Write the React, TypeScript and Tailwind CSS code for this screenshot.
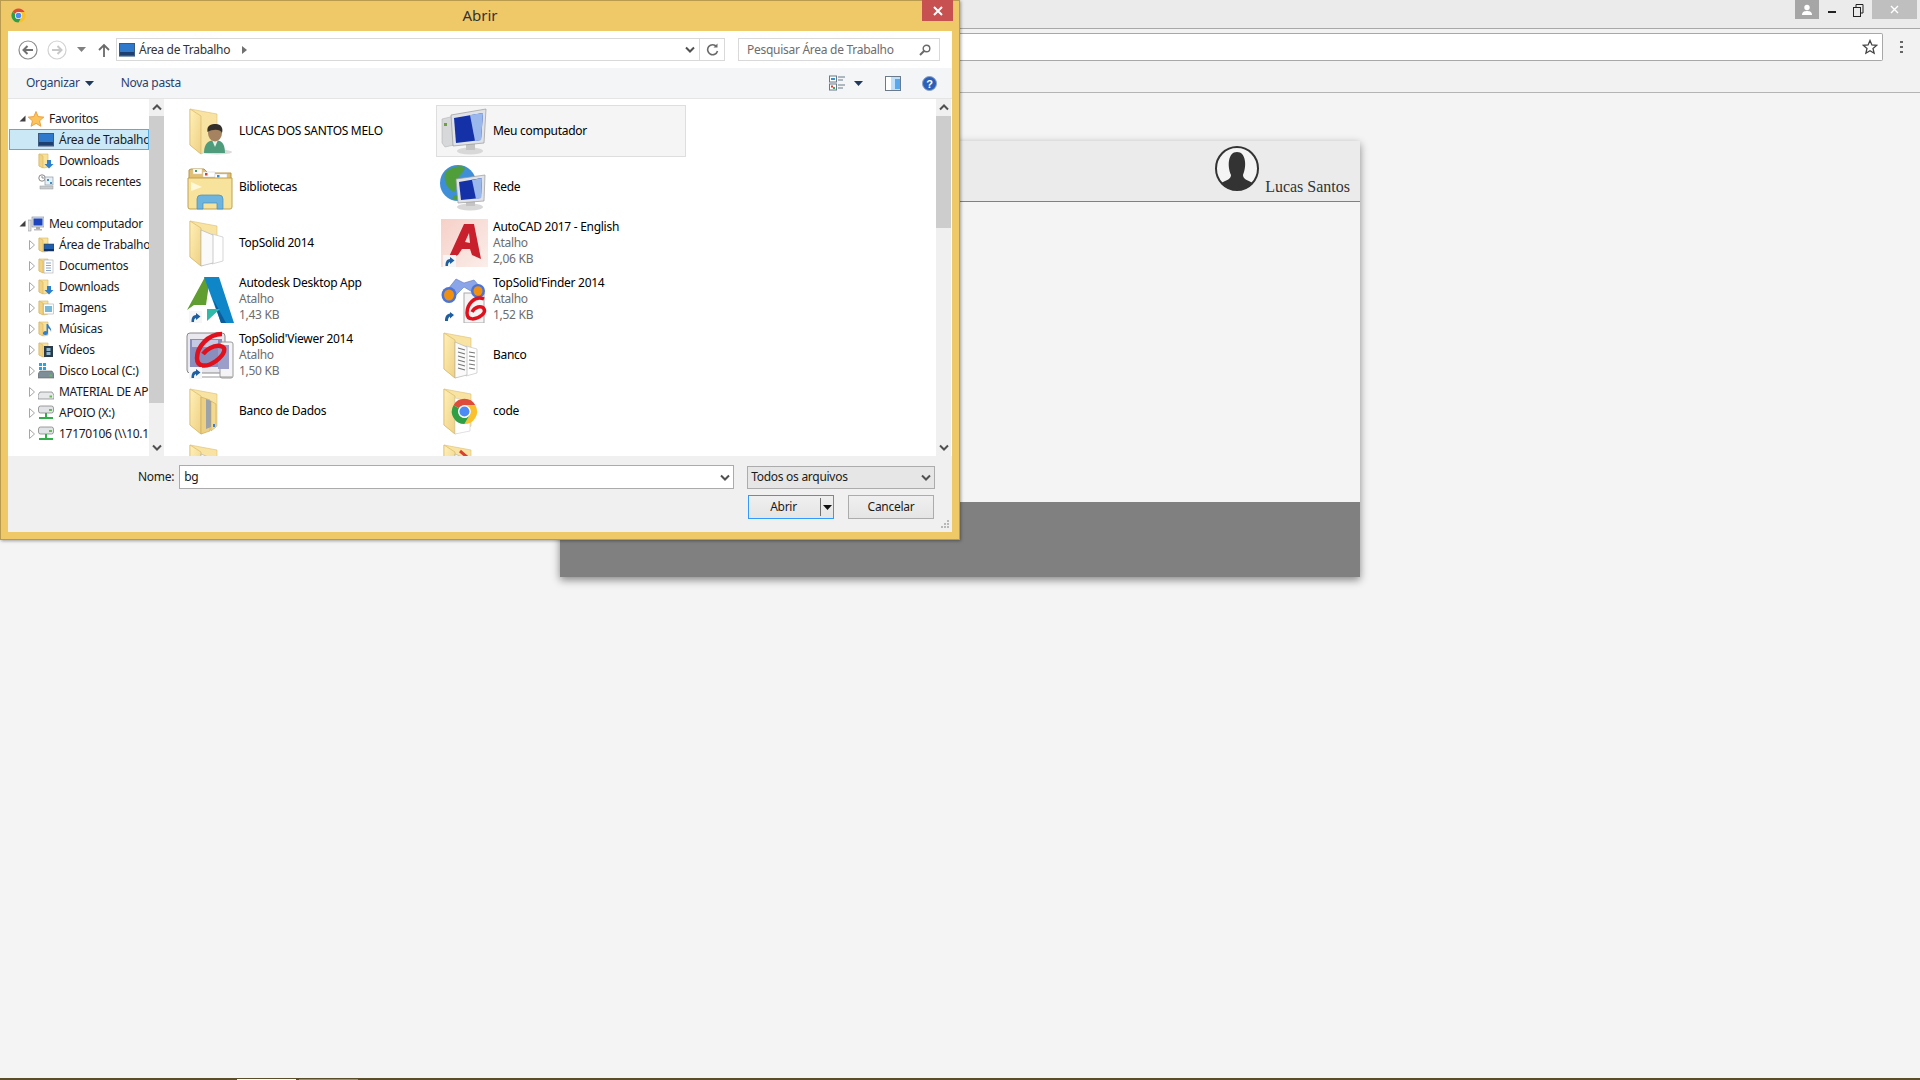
import React from "react";

const uiFont = "font-['Noto_Sans',sans-serif] tracking-[-0.28px]";

const Chevron = ({ dir = "down", color = "#505050", className = "" }: { dir?: "down" | "up"; color?: string; className?: string }) => (
  <svg width="10" height="7" viewBox="0 0 10 7" className={className}>
    <path d={dir === "down" ? "M1 1.5 L5 5.5 L9 1.5" : "M1 5.5 L5 1.5 L9 5.5"} fill="none" stroke={color} strokeWidth="2" />
  </svg>
);

const ChromeMark = () => (
  <g>
    <path d="M16 1 A15 15 0 0 1 29 8.5 L16 8.5 A7.5 7.5 0 0 0 9.5 12.2 L3 8.5 A15 15 0 0 1 16 1Z" fill="#dd4b39" />
    <path d="M29 8.5 A15 15 0 0 1 16 31 L22.5 19.8 A7.5 7.5 0 0 0 22.5 12.2 L16 8.5Z" fill="#fbc02d" />
    <path d="M3 8.5 L9.5 12.2 A7.5 7.5 0 0 0 16 23.5 A7.5 7.5 0 0 0 22.5 19.8 L16 31 A15 15 0 0 1 3 8.5Z" fill="#2f9e44" />
    <circle cx="16" cy="16" r="7.5" fill="#fff" />
    <circle cx="16" cy="16" r="6" fill="#4c8bf5" />
  </g>
);

const Shortcut = () => (
  <g>
    <rect x="3" y="36" width="13" height="12" fill="#f4f6f8" />
    <path d="M5.5 47 C5.5 42 7 40.5 10 40 L10 38 L14.5 41.5 L10 45 L10 43 C8.5 43.3 8 45 8 47Z" fill="#1f5f9f" />
  </g>
);

const BigFolder = ({ children, over }: { children?: React.ReactNode; over?: React.ReactNode }) => (
  <svg width="48" height="48" viewBox="0 0 48 48">
    <defs>
      <linearGradient id="flap" x1="0" y1="0" x2="1" y2="1">
        <stop offset="0" stopColor="#fff0b8" />
        <stop offset="1" stopColor="#eed083" />
      </linearGradient>
    </defs>
    <path d="M4 2 L31 7 L31 39 L15 47 L4 38Z" fill="#f9e3a2" stroke="#dfc47c" strokeWidth="0.7" />
    {children}
    <path d="M4 2 L15 9 L15 47 L4 38Z" fill="url(#flap)" stroke="#d9b968" strokeWidth="0.7" />
    {over}
  </svg>
);

const Papers = () => (
  <g>
    <path d="M26 15 L37 18 L37 42 L26 45Z" fill="#fff" stroke="#c4c4c4" strokeWidth="0.7" />
    <path d="M15 11 L27 16 L27 44 L15 47Z" fill="#fafafa" stroke="#b4b4b4" strokeWidth="0.7" />
  </g>
);

const ListIcon = ({ name }: { name: string }) => {
  if (name === "user")
    return (
      <BigFolder
        over={
          <g>
            <ellipse cx="31" cy="45" rx="15" ry="2.5" fill="#dcdcdc" />
            <path d="M18 46 C18 36 23 33 29 33 C35 33 39 36 39 46Z" fill="#4f9c7d" />
            <path d="M26 33 L29 40 L32 33Z" fill="#e6efe9" />
            <ellipse cx="29" cy="26" rx="7" ry="8.5" fill="#a58260" />
            <path d="M21.5 25 C20.5 18 25 17 30 17 C35 17 37.5 21 36 26 C34.5 22 27 22 21.5 25Z" fill="#33302c" />
          </g>
        }
      />
    );
  if (name === "lib")
    return (
      <svg width="48" height="48" viewBox="0 0 48 48">
        <path d="M3 7 L3 44 L45 44 L45 10 L22 10 L18 6 L5 6Z" fill="#e3c070" stroke="#b8964a" />
        <rect x="7" y="6" width="9" height="5" fill="#fff" stroke="#ccc" strokeWidth="0.5" />
        <rect x="9" y="7" width="2" height="2" fill="#3da55d" />
        <rect x="17" y="9" width="12" height="5" fill="#fff" stroke="#ccc" strokeWidth="0.5" />
        <rect x="19" y="10" width="2.5" height="2.5" fill="#d9402f" />
        <rect x="29" y="11" width="12" height="5" fill="#fff" stroke="#ccc" strokeWidth="0.5" />
        <rect x="31" y="12" width="2.5" height="2.5" fill="#2f8fdc" />
        <path d="M2 15 L46 15 L46 44 Q46 46 44 46 L4 46 Q2 46 2 44Z" fill="#f8e39c" stroke="#bfa050" />
        <path d="M11 46 L11 36 Q11 32 15 32 L33 32 Q37 32 37 36 L37 46 L31 46 L31 40 L17 40 L17 46Z" fill="#6db4de" stroke="#4b8cb8" strokeWidth="0.7" />
        <path d="M5 19 L16 24 L5 28Z" fill="#fff8da" />
      </svg>
    );
  if (name === "plain") return <BigFolder over={<Papers />} />;
  if (name === "doc")
    return (
      <BigFolder
        over={
          <g>
            <Papers />
            <path d="M18 17 L25 19 M18 21 L25 23 M18 25 L25 27 M18 29 L25 31 M18 33 L25 35 M18 37 L25 39 M29 21 L35 22 M29 25 L35 26 M29 29 L35 30 M29 33 L35 34 M29 37 L35 38" stroke="#777" strokeWidth="1.2" />
          </g>
        }
      />
    );
  if (name === "data")
    return (
      <BigFolder
        over={
          <g>
            <path d="M15 10 L24 13 L24 44 L15 47Z" fill="#eed083" stroke="#c8a85c" strokeWidth="0.6" />
            <path d="M20 12 L25 14 L25 40 L20 42Z" fill="#9aa2aa" />
            <path d="M25 14 L30 17 L30 40 L25 44Z" fill="#f4d98c" stroke="#c8a85c" strokeWidth="0.6" />
            <rect x="27" y="37" width="2" height="3" fill="#3a80d0" />
          </g>
        }
      />
    );
  if (name === "code")
    return (
      <BigFolder
        over={
          <g>
            <path d="M15 11 L30 15 L30 44 L15 47Z" fill="#fff" stroke="#ccc" strokeWidth="0.6" />
            <g transform="translate(11 11) scale(0.84)">
              <ChromeMark />
            </g>
          </g>
        }
      />
    );
  if (name === "clip")
    return (
      <BigFolder
        over={
          <g>
            <Papers />
            <path d="M20 8 L34 20" stroke="#d9402f" strokeWidth="3" />
          </g>
        }
      />
    );
  if (name === "autodesk")
    return (
      <svg width="48" height="48" viewBox="0 0 48 48">
        <path d="M1 35 L19 2 L24 2 L20 30 L8 30Z" fill="#5f9e2f" />
        <path d="M18 2 L33 2 L48 48 L35 48Z" fill="#0f86c8" />
        <path d="M35 48 L27 24 L40 48Z" fill="#0b5d9c" />
        <path d="M21 34 L34 34 L21 46Z" fill="#2fb9a8" />
        <Shortcut />
      </svg>
    );
  if (name === "autocad")
    return (
      <svg width="48" height="48" viewBox="0 0 48 48">
        <defs>
          <linearGradient id="cadbg" x1="0" y1="0" x2="1" y2="1">
            <stop offset="0" stopColor="#f6d0c8" />
            <stop offset="1" stopColor="#fbeeea" />
          </linearGradient>
        </defs>
        <rect x="1" y="0" width="47" height="48" fill="url(#cadbg)" />
        <path d="M8 40 L24 5 L34 5 L41 40 L32 36 L30 30 L22 30 L18 36Z" fill="#c8202c" />
        <path d="M25 23 L29 14 L30 24Z" fill="#f8dcd6" />
        <Shortcut />
      </svg>
    );
  if (name === "viewer")
    return (
      <svg width="48" height="48" viewBox="0 0 48 48">
        <rect x="1" y="2" width="38" height="40" rx="3" fill="#e8e8ee" stroke="#8a8a8a" />
        <rect x="4" y="8" width="32" height="28" fill="#8a8ebd" />
        <rect x="6" y="9" width="26" height="7" fill="#c5c9e4" />
        <rect x="34" y="11" width="13" height="36" rx="2" fill="#f4f4f6" stroke="#9a9a9a" />
        <rect x="32" y="14" width="11" height="24" fill="#9a9ec8" />
        <path d="M3 46 L46 46" stroke="#999" />
        <path d="M36 3 C22 3 11 16 11 27 C11 36 20 37 30 30 C38 24 42 16 34 15 C27 14 20 19 17 23" fill="none" stroke="#e0111c" strokeWidth="4.5" />
        <Shortcut />
      </svg>
    );
  if (name === "finder")
    return (
      <svg width="48" height="48" viewBox="0 0 48 48">
        <rect x="24" y="18" width="20" height="30" fill="#f4f4f4" stroke="#aaa" />
        <path d="M8 14 L16 4 L24 8 L34 5 L42 14 L34 18 L24 12 L16 20Z" fill="#8aa6e8" stroke="#5a74c8" strokeWidth="0.6" />
        <ellipse cx="9" cy="20" rx="7.5" ry="8" fill="#4a74d8" />
        <ellipse cx="9" cy="20" rx="5" ry="5.5" fill="#f09010" />
        <ellipse cx="38" cy="16" rx="7" ry="7" fill="#4a74d8" />
        <ellipse cx="38" cy="16" rx="4.5" ry="4.8" fill="#f09010" />
        <path d="M44 24 C34 20 27 30 27 38 C27 46 36 45 42 40 C47 36 44 31 38 32 C35 33 33 35 32 37" fill="none" stroke="#e0111c" strokeWidth="3.5" />
        <path d="M5 46 C5 41 7 39 10 38.5 L10 37 L14 40 L10 43.5 L10 41.5 C8.5 42 8 44 8 46Z" fill="#1f5f9f" />
      </svg>
    );
  if (name === "pc" || name === "net")
    return (
      <svg width="48" height="48" viewBox="0 0 48 48">
        {name === "net" ? (
          <g>
            <circle cx="18" cy="20" r="18" fill="#3f8fd8" />
            <path d="M5 10 C10 5 18 2 25 4 C24 10 20 11 18 15 C16 20 18 24 14 29 C8 27 3 18 5 10Z" fill="#4f9e3a" />
            <path d="M12 35 C14 31 20 31 22 34 C20 37 15 38 12 35Z" fill="#4f9e3a" />
          </g>
        ) : (
          <g>
            <path d="M2 12 L14 9 L14 38 L5 40 L2 36Z" fill="#d6d8da" stroke="#aaa" strokeWidth="0.5" />
            <rect x="4" y="16" width="3" height="3" fill="#6ea04a" />
          </g>
        )}
        <ellipse cx="30" cy="44" rx="13" ry="3.5" fill="#d8d8d8" />
        <rect x="26" y="36" width="9" height="7" fill="#c4c4c4" />
        <path d={name === "net" ? "M16 16 L45 12 L44 38 L18 40Z" : "M11 8 L46 2 L44 36 L13 39Z"} fill="#dfe2e6" stroke="#999" strokeWidth="0.7" />
        <path d={name === "net" ? "M19 19 L42 15 L41 35 L21 37Z" : "M14 11 L43 6 L41 33 L16 36Z"} fill="#1431a8" />
        <path d={name === "net" ? "M32 17 L42 15 L41 35 L36 36Z" : "M30 8 L43 6 L41 33 L35 34Z"} fill="#9bb8ec" />
      </svg>
    );
  return null;
};

const TreeIcon = ({ name }: { name: string }) => {
  const folder = (inner?: React.ReactNode) => (
    <svg width="16" height="16" viewBox="0 0 16 16" className="shrink-0">
      <path d="M1 1 L10 1 L10 14 L6 15 L1 13Z" fill="#f8e29a" stroke="#d4b565" strokeWidth="0.6" />
      <path d="M1 1 L5 3 L5 15 L1 13Z" fill="#f2d27e" stroke="#d4b565" strokeWidth="0.6" />
      {inner}
    </svg>
  );
  if (name === "desk")
    return (
      <svg width="16" height="16" viewBox="0 0 16 16" className="shrink-0">
        <rect x="0.5" y="1.5" width="15" height="12" fill="#2f79cc" stroke="#3a5a80" />
        <rect x="1" y="10" width="14" height="3" fill="#1c3f70" />
        <rect x="0" y="14" width="16" height="1" fill="#8aa0b8" />
      </svg>
    );
  if (name === "star")
    return (
      <svg width="16" height="16" viewBox="0 0 16 16" className="shrink-0">
        <path d="M8 0.5 L10.2 5.6 L15.8 6.1 L11.6 9.8 L12.9 15.3 L8 12.4 L3.1 15.3 L4.4 9.8 L0.2 6.1 L5.8 5.6Z" fill="#fbc35a" stroke="#e8932c" strokeWidth="0.8" />
      </svg>
    );
  if (name === "dl") return folder(<path d="M9 7 L13 7 L13 11 L15.5 11 L11 15.5 L6.5 11 L9 11Z" fill="#2f7fd0" />);
  if (name === "deskf") return folder(<g><rect x="6" y="7" width="10" height="7" fill="#1f5fae" stroke="#333" strokeWidth="0.5" /><rect x="6" y="12" width="10" height="2" fill="#15305a" /></g>);
  if (name === "docs") return folder(<g><rect x="6" y="2" width="9" height="13" fill="#fff" stroke="#aaa" strokeWidth="0.6" /><path d="M8 5 H13 M8 7.5 H13 M8 10 H13 M8 12.5 H13" stroke="#6f8fb8" strokeWidth="0.8" /></g>);
  if (name === "img") return folder(<g><rect x="5.5" y="4" width="10" height="10" fill="#fff" stroke="#aaa" strokeWidth="0.6" /><rect x="7" y="6" width="7" height="6" fill="#7ab8d8" /></g>);
  if (name === "music") return folder(<path d="M10 3 L10 12 A2.5 2 0 1 1 8.5 10.2 L8.5 3 L10 3 C11 6 14 7 13 11 C12.8 8.5 11 8 10 7Z" fill="#2f7fd0" />);
  if (name === "video") return folder(<g><rect x="6" y="4" width="9" height="11" fill="#2a3a48" /><rect x="8.5" y="6" width="4" height="3" fill="#8fb8d0" /><rect x="8.5" y="10" width="4" height="3" fill="#8fb8d0" /></g>);
  if (name === "recent")
    return (
      <svg width="16" height="16" viewBox="0 0 16 16" className="shrink-0">
        <circle cx="4" cy="4" r="3.2" fill="#fff" stroke="#888" />
        <path d="M4 2 L4 4 L6 4" stroke="#666" fill="none" strokeWidth="0.7" />
        <rect x="7" y="3" width="8" height="8" fill="#e8eef4" stroke="#8a9aa8" strokeWidth="0.7" />
        <rect x="9" y="5" width="2" height="2" fill="#3a90c8" />
        <rect x="12" y="8" width="2" height="2" fill="#3a90c8" />
        <rect x="2" y="12" width="13" height="3" fill="#c8ccd0" stroke="#999" strokeWidth="0.5" />
      </svg>
    );
  if (name === "pc")
    return (
      <svg width="16" height="16" viewBox="0 0 16 16" className="shrink-0">
        <rect x="0" y="4" width="3" height="11" fill="#dfe2e4" stroke="#888" strokeWidth="0.5" />
        <rect x="4" y="1" width="12" height="10" fill="#dfe2e6" stroke="#7a8a9a" strokeWidth="0.6" />
        <rect x="5.5" y="2.5" width="9" height="7" fill="#1d45c0" />
        <rect x="8" y="11" width="4" height="2" fill="#aaa" />
        <rect x="6" y="13" width="8" height="1.5" fill="#bbb" />
      </svg>
    );
  if (name === "disk" || name === "drive")
    return (
      <svg width="16" height="16" viewBox="0 0 16 16" className="shrink-0">
        {name === "disk" && (
          <g fill="#19a9ef">
            <rect x="1" y="0" width="3" height="3" />
            <rect x="5" y="0" width="3" height="3" />
            <rect x="1" y="4" width="3" height="3" />
            <rect x="5" y="4" width="3" height="3" />
          </g>
        )}
        <path d="M2 8 L14 8 L16 11 L16 15 L0 15 L0 11Z" fill={name === "disk" ? "#7d8e99" : "#e6e8ea"} stroke="#666" strokeWidth="0.6" />
        <rect x="11.5" y="11.5" width="2.5" height="2" fill="#5fc04a" />
      </svg>
    );
  if (name === "netd")
    return (
      <svg width="16" height="16" viewBox="0 0 16 16" className="shrink-0">
        <rect x="0.5" y="1" width="15" height="7" rx="2" fill="#e0e4e6" stroke="#777" strokeWidth="0.7" />
        <rect x="11" y="4" width="3" height="2" fill="#5fc04a" />
        <rect x="7" y="8" width="2" height="4" fill="#2fae4a" />
        <rect x="1" y="12" width="14" height="2" fill="#2fae4a" />
      </svg>
    );
  return null;
};

const tree = [
  { label: "Área de Trabalho", icon: "deskf" },
  { label: "Documentos", icon: "docs" },
  { label: "Downloads", icon: "dl" },
  { label: "Imagens", icon: "img" },
  { label: "Músicas", icon: "music" },
  { label: "Vídeos", icon: "video" },
  { label: "Disco Local (C:)", icon: "disk" },
  { label: "MATERIAL DE AP", icon: "drive" },
  { label: "APOIO (X:)", icon: "netd" },
  { label: "17170106 (\\\\10.10", icon: "netd" },
];

const files = [
  { name: "LUCAS DOS SANTOS MELO", icon: "user" },
  { name: "Meu computador", icon: "pc", hover: true },
  { name: "Bibliotecas", icon: "lib" },
  { name: "Rede", icon: "net" },
  { name: "TopSolid 2014", icon: "plain" },
  { name: "AutoCAD 2017 - English", icon: "autocad", size: "2,06 KB" },
  { name: "Autodesk Desktop App", icon: "autodesk", size: "1,43 KB" },
  { name: "TopSolid'Finder 2014", icon: "finder", size: "1,52 KB" },
  { name: "TopSolid'Viewer 2014", icon: "viewer", size: "1,50 KB" },
  { name: "Banco", icon: "doc" },
  { name: "Banco de Dados", icon: "data" },
  { name: "code", icon: "code" },
  { name: "", icon: "plain" },
  { name: "", icon: "clip" },
];

const Scrollbar = ({ thumb }: { thumb: string }) => (
  <div className="flex w-[15px] shrink-0 flex-col bg-[#f0f0f0]">
    <div className="flex h-[17px] items-center justify-center">
      <Chevron dir="up" />
    </div>
    <div className={`${thumb} bg-[#cdcdcd]`}></div>
    <div className="flex-1"></div>
    <div className="flex h-[17px] items-center justify-center">
      <Chevron />
    </div>
  </div>
);

const Caret = ({ color = "#444" }: { color?: string }) => (
  <svg width="9" height="5" viewBox="0 0 9 5">
    <path d="M0 0 H9 L4.5 5Z" fill={color} />
  </svg>
);

const Expander = () => (
  <svg width="6" height="10" viewBox="0 0 6 10" className="shrink-0">
    <path d="M0.5 0.5 L5.5 5 L0.5 9.5Z" fill="#fff" stroke="#a6a6a6" />
  </svg>
);

const Open = () => (
  <svg width="7" height="7" viewBox="0 0 7 7" className="shrink-0">
    <path d="M6.5 0.5 L6.5 6.5 L0.5 6.5Z" fill="#404040" />
  </svg>
);

const FileDialog = () => (
  <div className={`absolute left-0 top-0 z-10 flex h-[540px] w-[960px] flex-col border border-[#b89b4e] bg-[#efc868] shadow-[1px_1px_3px_rgba(0,0,0,0.35)] ${uiFont}`}>
    <div className="relative flex h-[30px] shrink-0 items-center justify-center pb-px text-[15px] tracking-normal text-[#333]">
      <div className="absolute left-[10px] top-[7px]">
        <svg width="15" height="15" viewBox="0 0 32 32">
          <ChromeMark />
        </svg>
      </div>
      Abrir
      <div className="absolute right-[6px] top-[-1px] flex h-[21px] w-[31px] items-center justify-center bg-[#c75050]">
        <svg width="10" height="10" viewBox="0 0 10 10">
          <path d="M1 1 L9 9 M9 1 L1 9" stroke="#fff" strokeWidth="2" />
        </svg>
      </div>
    </div>

    <div className="mx-[7px] flex h-[501px] flex-col bg-white text-[12px] text-black">
      {/* Navigation */}
      <div className="flex h-[37px] shrink-0 items-center">
        <svg width="20" height="20" viewBox="0 0 20 20" className="ml-[10px]">
          <circle cx="10" cy="10" r="9" fill="#fff" stroke="#8c8c8c" strokeWidth="1.2" />
          <path d="M15 10 H5.5 M9.5 6 L5.5 10 L9.5 14" fill="none" stroke="#707070" strokeWidth="2" />
        </svg>
        <svg width="20" height="20" viewBox="0 0 20 20" className="ml-[9px]">
          <circle cx="10" cy="10" r="9" fill="#fff" stroke="#d2d2d2" strokeWidth="1.2" />
          <path d="M5 10 H14.5 M10.5 6 L14.5 10 L10.5 14" fill="none" stroke="#c8c8c8" strokeWidth="2" />
        </svg>
        <div className="ml-[10px]">
          <Caret color="#808080" />
        </div>
        <svg width="12" height="14" viewBox="0 0 12 14" className="ml-[12px]">
          <path d="M6 14 V2 M1 7 L6 2 L11 7" fill="none" stroke="#6a6a6a" strokeWidth="1.8" />
        </svg>
        <div className="ml-[6px] flex h-[23px] w-[609px] items-center border border-[#d9d9d9] pl-[2px]">
          <TreeIcon name="desk" />
          <span className="ml-[4px] text-[#333]">Área de Trabalho</span>
          <svg width="5" height="8" viewBox="0 0 5 8" className="ml-[12px]">
            <path d="M0 0 L5 4 L0 8Z" fill="#707070" />
          </svg>
          <div className="ml-auto mr-[4px]">
            <Chevron />
          </div>
          <div className="flex h-full w-[25px] items-center justify-center border-l border-[#d9d9d9]">
            <svg width="13" height="13" viewBox="0 0 13 13">
              <path d="M10.5 3.5 A5 5 0 1 0 11.5 8" fill="none" stroke="#6a6a6a" strokeWidth="1.6" />
              <path d="M7.5 4.5 H11.5 V0.5Z" fill="#6a6a6a" />
            </svg>
          </div>
        </div>
        <div className="ml-[13px] flex h-[23px] w-[202px] items-center justify-between border border-[#d9d9d9] px-2 text-[#6d6d6d]">
          <span>Pesquisar Área de Trabalho</span>
          <svg width="12" height="12" viewBox="0 0 12 12">
            <circle cx="7.5" cy="4.5" r="3.3" fill="none" stroke="#6a6a6a" strokeWidth="1.4" />
            <path d="M5 7 L1 11" stroke="#6a6a6a" strokeWidth="2" />
          </svg>
        </div>
      </div>

      {/* Toolbar */}
      <div className="flex h-[31px] shrink-0 items-center border-b border-[#e5e5e5] bg-[#f3f5f7] text-[#2b3f6b]">
        <span className="ml-[18px]">Organizar</span>
        <div className="ml-[5px]">
          <Caret color="#1e395b" />
        </div>
        <span className="ml-[27px]">Nova pasta</span>
        <svg width="16" height="16" viewBox="0 0 16 16" className="ml-auto">
          <rect x="0.5" y="1" width="7" height="6" fill="#fff" stroke="#6a7a8a" />
          <rect x="2" y="3" width="4" height="2" fill="#3a90c8" />
          <rect x="0.5" y="9" width="7" height="6" fill="#fff" stroke="#6a7a8a" />
          <rect x="2" y="10.5" width="2" height="2" fill="#d9402f" />
          <rect x="4" y="12" width="2" height="2" fill="#3da55d" />
          <path d="M9 2 H16 M9 5 H14 M9 10 H16 M9 13 H14" stroke="#6a7a8a" />
        </svg>
        <div className="ml-[9px]">
          <Caret color="#1e395b" />
        </div>
        <svg width="16" height="15" viewBox="0 0 16 15" className="ml-[22px]">
          <rect x="0.5" y="0.5" width="15" height="14" fill="#fff" stroke="#6a7a8a" />
          <rect x="6" y="1" width="9" height="13" fill="#bfe0fa" />
          <rect x="10" y="3" width="5" height="10" fill="#5aa8ec" />
        </svg>
        <svg width="15" height="15" viewBox="0 0 15 15" className="ml-[21px] mr-[15px]">
          <circle cx="7.5" cy="7.5" r="7" fill="#2b5fb8" stroke="#8aa0c0" />
          <text x="7.5" y="11.5" textAnchor="middle" fontSize="11" fontWeight="700" fontFamily="Liberation Sans" fill="#fff">?</text>
        </svg>
      </div>

      {/* Tree and file list */}
      <div className="flex h-[357px] shrink-0 overflow-hidden pr-px">
        <div className="w-[141px] shrink-0 overflow-hidden whitespace-nowrap pt-[9px] text-[#1a1a1a]">
          <div className="flex h-[21px] items-center pl-[11px]">
            <Open />
            <div className="ml-[2px]">
              <TreeIcon name="star" />
            </div>
            <span className="ml-[5px]">Favoritos</span>
          </div>
          <div className="ml-[1px] flex h-[21px] items-center overflow-hidden border border-[#54ade3] bg-[#cbe8f6] pl-[28px]">
            <TreeIcon name="desk" />
            <span className="ml-[5px]">Área de Trabalho</span>
          </div>
          <div className="flex h-[21px] items-center pl-[30px]">
            <TreeIcon name="dl" />
            <span className="ml-[5px]">Downloads</span>
          </div>
          <div className="flex h-[21px] items-center pl-[30px]">
            <TreeIcon name="recent" />
            <span className="ml-[5px]">Locais recentes</span>
          </div>
          <div className="h-[21px]"></div>
          <div className="flex h-[21px] items-center pl-[11px]">
            <Open />
            <div className="ml-[2px]">
              <TreeIcon name="pc" />
            </div>
            <span className="ml-[5px]">Meu computador</span>
          </div>
          {tree.map((item) => (
            <div key={item.label} className="flex h-[21px] items-center pl-[21px]">
              <Expander />
              <div className="ml-[3px]">
                <TreeIcon name={item.icon} />
              </div>
              <span className="ml-[5px]">{item.label}</span>
            </div>
          ))}
        </div>
        <Scrollbar thumb="h-[287px]" />
        <div className="w-[2px] shrink-0"></div>
        <div className="flex-1 overflow-hidden pl-[16px] pt-[6px]">
          <div className="grid grid-cols-[250px_250px] gap-1">
            {files.map((file, i) => (
              <div key={i} className={`flex h-[52px] items-center border pl-[3px] ${file.hover ? "border-[#dedede] bg-[#f5f5f5]" : "border-transparent"}`}>
                <ListIcon name={file.icon} />
                <div className="ml-[5px] leading-[16px]">
                  <div>{file.name}</div>
                  {file.size && <div className="text-[#6d6d6d]">Atalho</div>}
                  {file.size && <div className="text-[#6d6d6d]">{file.size}</div>}
                </div>
              </div>
            ))}
          </div>
        </div>
        <Scrollbar thumb="h-[112px]" />
      </div>

      {/* Name and actions */}
      <div className="relative flex-1 bg-[#f0f0f0] text-[#1a1a1a]">
        <div className="flex items-center pl-[130px] pt-[9px]">
          <span>Nome:</span>
          <div className="ml-[5px] flex h-[24px] w-[555px] items-center justify-between border border-[#ababab] bg-white pl-1 pr-[3px]">
            <span>bg</span>
            <Chevron />
          </div>
          <div className="ml-[13px] flex h-[23px] w-[188px] items-center justify-between border border-[#acacac] bg-[#e6e6e6] pl-[3px] pr-[3px]">
            <span>Todos os arquivos</span>
            <Chevron />
          </div>
        </div>
        <div className="mt-[6px] flex justify-end pr-[18px]">
          <div className="flex h-[24px] w-[86px] items-center border border-[#3399ff] bg-gradient-to-b from-[#f0f0f0] to-[#e5e5e5]">
            <span className="w-[69px] text-center">Abrir</span>
            <div className="ml-[2px] h-[18px] w-px bg-[#707070]"></div>
            <div className="ml-[2px]">
              <Caret color="#111" />
            </div>
          </div>
          <div className="ml-[14px] flex h-[24px] w-[86px] items-center justify-center border border-[#acacac] bg-gradient-to-b from-[#f0f0f0] to-[#e5e5e5]">
            Cancelar
          </div>
        </div>
        <svg width="10" height="10" viewBox="0 0 10 10" className="absolute bottom-[2px] right-[2px]" fill="#b8b8b8">
          <rect x="7" y="0" width="2" height="2" />
          <rect x="4" y="3" width="2" height="2" />
          <rect x="7" y="3" width="2" height="2" />
          <rect x="1" y="6" width="2" height="2" />
          <rect x="4" y="6" width="2" height="2" />
          <rect x="7" y="6" width="2" height="2" />
        </svg>
      </div>
    </div>
  </div>
);

const App: React.FC = () => {
  return (
    <div className="relative flex h-[1080px] w-[1920px] flex-col overflow-hidden bg-[#f4f4f4] font-['Liberation_Serif',serif]">
      <FileDialog />

      {/* Browser window */}
      <div className="flex h-[28px] shrink-0 items-start justify-end bg-[#ebebeb] pr-[3px]">
        <div className="flex h-[19px] w-[24px] items-center justify-center bg-[#a6a6a6]">
          <svg width="10" height="12" viewBox="0 0 10 12" fill="#fff">
            <circle cx="5" cy="3.5" r="2.7" />
            <path d="M0 11 C0 7.5 2.5 7 5 7 C7.5 7 10 7.5 10 11Z" />
          </svg>
        </div>
        <div className="ml-[9px] mt-[11px] h-[2px] w-[8px] bg-[#222]"></div>
        <svg width="11" height="14" viewBox="0 0 11 14" className="ml-[17px] mt-[4px]">
          <rect x="0.5" y="3.5" width="7" height="9" fill="none" stroke="#222" />
          <path d="M3 3 V0.5 H10 V9 H8" fill="none" stroke="#222" />
        </svg>
        <div className="ml-[8px] flex h-[19px] w-[45px] items-center justify-center bg-[#bfbfbf]">
          <svg width="9" height="9" viewBox="0 0 9 9">
            <path d="M1 1 L8 8 M8 1 L1 8" stroke="#fff" strokeWidth="1.4" />
          </svg>
        </div>
      </div>
      <div className="flex h-[33px] shrink-0 items-start border-t border-[#a8a8a8] bg-[#f2f2f2] pt-[4px]">
        <div className="ml-auto flex h-[28px] w-[963px] items-center justify-end rounded-r-[2px] border-y border-r border-[#a8a8a8] bg-white pr-[4px]">
          <svg width="16" height="16" viewBox="0 0 16 16">
            <path d="M8 1.5 L9.9 6 L14.6 6.4 L11 9.5 L12.1 14.2 L8 11.7 L3.9 14.2 L5 9.5 L1.4 6.4 L6.1 6Z" fill="none" stroke="#444" strokeWidth="1.3" />
          </svg>
        </div>
        <div className="mx-[17px] mt-[8px] flex flex-col gap-[3px]">
          <div className="h-[2px] w-[3px] bg-[#666]"></div>
          <div className="h-[2px] w-[3px] bg-[#666]"></div>
          <div className="h-[2px] w-[3px] bg-[#666]"></div>
        </div>
      </div>
      <div className="h-[32px] shrink-0 border-b border-[#b4b4b4] bg-[#f2f2f2]"></div>

      {/* Page content */}
      <div className="mx-auto mt-[48px] flex h-[436px] w-[800px] shrink-0 flex-col shadow-[0_3px_8px_rgba(0,0,0,0.45)]">
        <div className="flex h-[61px] shrink-0 items-start justify-end border-b border-[#808080] bg-[#ebebeb] pr-[10px] pt-[5px]">
          <svg width="44" height="45" viewBox="0 0 44 45">
            <ellipse cx="22" cy="22.5" rx="21" ry="21.5" fill="#f4f4f4" stroke="#333" strokeWidth="2" />
            <path d="M6 37 C12 34 16 33 16 29 C12 20 13 6 22 6 C31 6 32 20 28 29 C28 33 32 34 38 37 C34 42 28 44 22 44 C16 44 10 42 6 37Z" fill="#333" />
          </svg>
          <span className="ml-[6px] mt-[31px] text-[16px] leading-[20px] text-[#333]">Lucas Santos</span>
        </div>
        <div className="flex-1 bg-[#f4f4f4]"></div>
        <div className="h-[75px] shrink-0 bg-[#808080]"></div>
      </div>

      {/* Taskbar edge */}
      <div className="mt-auto flex h-[2px] shrink-0 bg-[#5a4d2a] pl-[237px] pt-px">
        <div className="h-px w-[59px] bg-[#fdfbf5]"></div>
        <div className="ml-[3px] h-px w-[59px] bg-[#968f7c]"></div>
      </div>
    </div>
  );
};

export default App;
